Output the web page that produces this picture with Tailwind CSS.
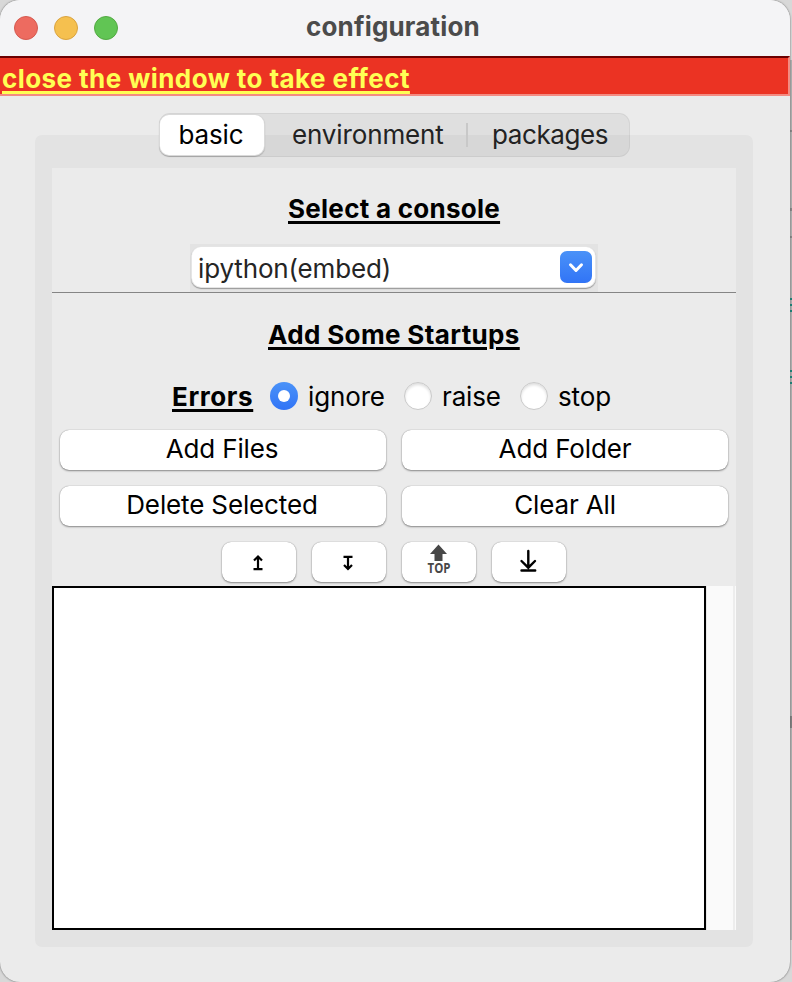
<!DOCTYPE html>
<html lang="en">
<head>
<meta charset="utf-8">
<title>configuration</title>
<script src="https://cdn.jsdelivr.net/npm/@tailwindcss/browser@4"></script>
</head>
<body class="relative h-[982px] w-[792px] overflow-hidden bg-[#b5b5b5] font-['Inter','Liberation_Sans',sans-serif] text-[26px] leading-8 tracking-[-0.14px] text-black">
<!-- desktop edge behind the window -->
<div class="absolute inset-0 bg-[#d8d8d8]">
  <div class="absolute right-0 top-[60px] h-[880px] w-[2px] bg-[#b2b2b2]"></div>
  <div class="absolute right-0 top-[130px] h-[2px] w-[2px] bg-[#888]"></div>
  <div class="absolute right-0 top-[208px] h-[3px] w-[2px] bg-[#888]"></div>
  <div class="absolute right-0 top-[236px] h-[2px] w-[2px] bg-[#888]"></div>
  <div class="absolute right-0 top-[298px] h-[2px] w-[2px] bg-[#17857a] shadow-[0_6px_#17857a,0_12px_#17857a]"></div>
  <div class="absolute right-0 top-[370px] h-[2px] w-[2px] bg-[#17857a] shadow-[0_6px_#17857a,0_12px_#17857a]"></div>
  <div class="absolute right-0 top-[716px] h-[12px] w-[2px] bg-[#808080]"></div>
</div>
<main class="relative flex h-[982px] w-[790px] flex-col overflow-hidden rounded-[20px] bg-[#ebebeb] shadow-[0_0_2px_#555]">
  <header class="relative flex h-14 shrink-0 items-center bg-[#f4f4f6] pl-[14px]">
    <div class="flex gap-4">
      <i class="size-6 rounded-full border border-[#d45a50] bg-[#ed6b60]"></i>
      <i class="size-6 rounded-full border border-[#d9a340] bg-[#f5c04f]"></i>
      <i class="size-6 rounded-full border border-[#53a943] bg-[#61c554]"></i>
    </div>
    <h1 class="ml-[188px] h-[34px] whitespace-nowrap font-bold tracking-[0.17px] text-[#4b4b4b]">configuration</h1>
  </header>
  <div class="h-10 shrink-0 whitespace-nowrap border-b-2 border-r-2 border-t-2 border-[#f38b82] border-t-[#6b0000] bg-[#eb3323] pl-[2px] pt-[5px] font-bold tracking-[0.43px] text-[#ffff54]"><span class="underline decoration-[3px] underline-offset-[3px]">close the window to take effect</span></div>

  <nav class="relative z-10 ml-[159px] mt-[17px] flex h-11 w-[471px] shrink-0 items-center rounded-[11px] border border-black/5 bg-black/5 whitespace-nowrap text-[#222]">
    <div class="-ml-px flex h-[42px] w-[106px] items-center justify-center rounded-[10px] border border-black/15 bg-white pr-[2px] text-black shadow-[0_1px_1px_#0003]"><span>basic</span></div>
    <div class="ml-[27px] w-[151px]"><span>environment</span></div>
    <i class="ml-[23px] h-6 w-[2px] bg-[#c8c8c8]"></i>
    <div class="ml-[24px] w-[116px] tracking-[-0.4px]"><span>packages</span></div>
  </nav>

  <section class="-mt-[22px] ml-[35px] h-[812px] w-[718px] shrink-0 rounded-[7px] bg-[#e3e3e3] px-[17px] pt-[33px]">
    <div class="flex h-[762px] w-[684px] flex-col bg-[#ebebeb]">
      <h2 class="ml-[236px] mt-[25px] h-8 whitespace-nowrap font-bold tracking-[0.27px]"><span class="underline decoration-[3px] underline-offset-[3px]">Select a console</span></h2>
      <div class="ml-[138px] mt-[19px] h-12 w-[408px] bg-[#e3e3e3] pl-px pr-[2px] pt-[2px]">
        <div class="flex h-[42px] items-center justify-between rounded-[10px] border border-black/10 bg-white pl-[6px] pr-[3px] text-[#252525] shadow-[0_1px_1px_#0005]">
          <span class="whitespace-nowrap pt-[3px]">ipython(embed)</span>
          <svg class="h-8 w-8" viewBox="0 0 32 32"><defs><linearGradient id="blue" x2="0" y2="1"><stop stop-color="#4a92f8"/><stop offset="1" stop-color="#3174f6"/></linearGradient></defs><rect width="32" height="32" rx="7" fill="url(#blue)"/><path d="M10.500 13.800 16 19.500l5.500-5.700" fill="none" stroke="white" stroke-width="3" stroke-linecap="round" stroke-linejoin="round"/></svg>
        </div>
      </div>
      <div class="h-px shrink-0 bg-[#858585]"></div>
      <h2 class="ml-[216px] mt-[26px] h-8 whitespace-nowrap font-bold tracking-[0.36px]"><span class="underline decoration-[3px] underline-offset-[3px]">Add Some Startups</span></h2>
      <div class="ml-[120px] mt-[29px] flex h-8 items-center whitespace-nowrap">
        <div class="w-[98px] pt-[2px] font-bold tracking-[0.6px]"><span class="underline decoration-[3px] underline-offset-[3px]">Errors</span></div>
        <svg class="size-7" viewBox="0 0 28 28"><circle cx="14" cy="14" r="14" fill="url(#blue)"/><circle cx="14" cy="14" r="6" fill="white"/></svg>
        <div class="ml-[10px] w-[96px] pt-[2px]"><span>ignore</span></div>
        <i class="size-7 rounded-full border border-[#c9c9c9] bg-white shadow-[inset_0_2px_3px_#0002]"></i>
        <div class="ml-[10px] w-[78px] pt-[2px]"><span>raise</span></div>
        <i class="size-7 rounded-full border border-[#c9c9c9] bg-white shadow-[inset_0_2px_3px_#0002]"></i>
        <div class="ml-[10px] pt-[2px]"><span>stop</span></div>
      </div>
      <div class="ml-[8px] mt-[18px] grid w-[668px] grid-cols-2 gap-4 text-center">
        <button class="h-10 rounded-[9px] bg-white pb-[3px] pr-[2px] shadow-[0_0_1px_#0006,0_1px_2px_#0006]"><span>Add Files</span></button>
        <button class="h-10 rounded-[9px] bg-white pb-[3px] shadow-[0_0_1px_#0006,0_1px_2px_#0006]"><span>Add Folder</span></button>
        <button class="h-10 rounded-[9px] bg-white pb-[3px] pr-[2px] shadow-[0_0_1px_#0006,0_1px_2px_#0006]"><span>Delete Selected</span></button>
        <button class="h-10 rounded-[9px] bg-white pb-[3px] shadow-[0_0_1px_#0006,0_1px_2px_#0006]"><span>Clear All</span></button>
      </div>
      <div class="ml-[170px] mt-4 flex h-[44px] gap-4">
        <button class="h-10 w-[74px] rounded-[9px] bg-white shadow-[0_0_1px_#0006,0_1px_2px_#0006]"><svg class="size-full" viewBox="0 0 74 40" fill="none" stroke="black" stroke-width="2.200"><path d="M36 27V14.500M32 18.500l4-4 4 4M31.500 27.200h9"/></svg></button>
        <button class="h-10 w-[74px] rounded-[9px] bg-white shadow-[0_0_1px_#0006,0_1px_2px_#0006]"><svg class="size-full" viewBox="0 0 74 40" fill="none" stroke="black" stroke-width="2.200"><path d="M36 15v12M32 23l4 4 4-4M31.500 14.800h9"/></svg></button>
        <button class="h-10 w-[74px] rounded-[9px] bg-white shadow-[0_0_1px_#0006,0_1px_2px_#0006]"><svg class="size-full" viewBox="0 0 74 40"><path d="M36.500 2.500 45 12h-4.500v7h-8v-7H28z" fill="#484848"/><text x="25.500" y="31" textLength="23" lengthAdjust="spacingAndGlyphs" letter-spacing="0" font-family="Open Sans, sans-serif" font-size="14" font-weight="700" fill="#484848">TOP</text></svg></button>
        <button class="h-10 w-[74px] rounded-[9px] bg-white shadow-[0_0_1px_#0006,0_1px_2px_#0006]"><svg class="size-full" viewBox="0 0 74 40" fill="none" stroke="black" stroke-width="2.400" stroke-linecap="round"><path d="M36.300 9v16.500M29.500 19l6.800 6.700L43 19M29.500 28.500h13.700"/></svg></button>
      </div>
      <div class="flex h-[344px] shrink-0">
        <div class="w-[654px] border-2 border-black bg-white"></div>
        <div class="w-[30px] border-l border-[#e8e8e8] bg-[#fafafa] pl-[26px]"><div class="h-full w-[2px] bg-[#ededed]"></div></div>
      </div>
    </div>
  </section>
</main>
</body>
</html>
